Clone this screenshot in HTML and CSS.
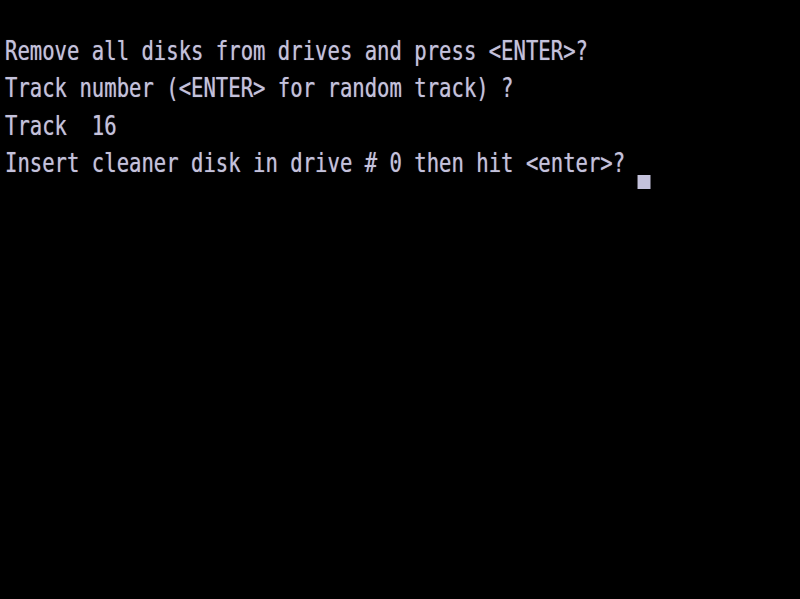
FILE: index.html
```html
<!DOCTYPE html>
<html>
<head>
<meta charset="utf-8">
<link rel="stylesheet" href="styles.css">
</head>
<body>
<div class="screen">
  <div class="text">
    <div class="line">Remove all disks from drives and press &lt;ENTER&gt;?</div>
    <div class="line">Track number (&lt;ENTER&gt; for random track) ?</div>
    <div class="line">Track  16</div>
    <div class="line">Insert cleaner disk in drive # 0 then hit &lt;enter&gt;? <span class="cursor"></span></div>
  </div>
</div>
</body>
</html>
```
FILE: styles.css
```css
html, body {
  margin: 0;
  padding: 0;
  background: #000;
}
.screen {
  width: 800px;
  height: 599px;
  background: #000;
  overflow: hidden;
  padding-top: 32px;
  padding-left: 5px;
  box-sizing: border-box;
}
.text {
  font-family: "DejaVu Sans Mono", "Liberation Mono", monospace;
  font-size: 27px;
  line-height: 37.3px;
  color: #c4c2dc;
  transform: scaleX(0.763);
  transform-origin: 0 0;
  text-shadow: 0 0 1px rgba(196, 194, 220, 0.6);
}
.line {
  white-space: pre;
  height: 37.3px;
}
.cursor {
  display: inline-block;
  width: 17px;
  height: 14px;
  background: #c4c2dc;
  vertical-align: -17px;
}
```
